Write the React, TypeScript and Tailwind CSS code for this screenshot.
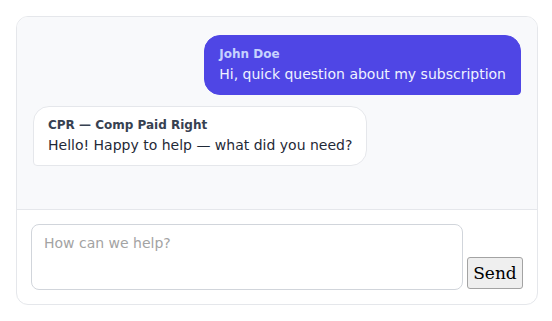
import React from "react";

export default function App() {
  return (
    <div className="pt-4 pl-4" style={{ fontFamily: '"DejaVu Sans", sans-serif' }}>
      <div className="w-[522px] overflow-hidden rounded-xl border border-[#e5e7eb] bg-white">
        <div className="flex h-48 flex-col gap-3 bg-[#f8f9fb] px-4 pt-[18px]">
          <div className="max-w-[80%] self-end rounded-2xl rounded-br-sm border border-[#4f46e5] bg-[#4f46e5] px-3.5 py-2.5">
            <div className="mb-0.5 text-xs leading-4 font-bold text-[#c7d2fe]">John Doe</div>
            <div className="text-sm leading-5 text-[#eef2ff]">Hi, quick question about my subscription</div>
          </div>
          <div className="-mt-px max-w-[80%] self-start rounded-2xl rounded-bl-sm border border-[#e5e7eb] bg-white px-3.5 py-2.5">
            <div className="mb-0.5 text-xs leading-4 font-bold text-[#374151]">CPR — Comp Paid Right</div>
            <div className="text-sm leading-5 text-[#1f2937]">Hello! Happy to help — what did you need?</div>
          </div>
        </div>
        <div className="flex items-end gap-1 border-t border-[#e5e7eb] p-3.5">
          <textarea
            rows={2}
            placeholder="How can we help?"
            className="h-[66px] w-[432px] shrink-0 resize-none rounded-lg border border-[#d1d5db] px-3 py-2 text-sm leading-[21px] text-[#1f2937] placeholder:text-[#a3a3a3] outline-none"
          />
          <button
            className="mb-px w-14 shrink-0 rounded-[3px] border border-[#a3a3a3] bg-[#efefef] py-[5px] text-center text-[17px] leading-[20px] text-black"
            style={{ fontFamily: '"DejaVu Serif", serif' }}
          >
            Send
          </button>
        </div>
      </div>
    </div>
  );
}
